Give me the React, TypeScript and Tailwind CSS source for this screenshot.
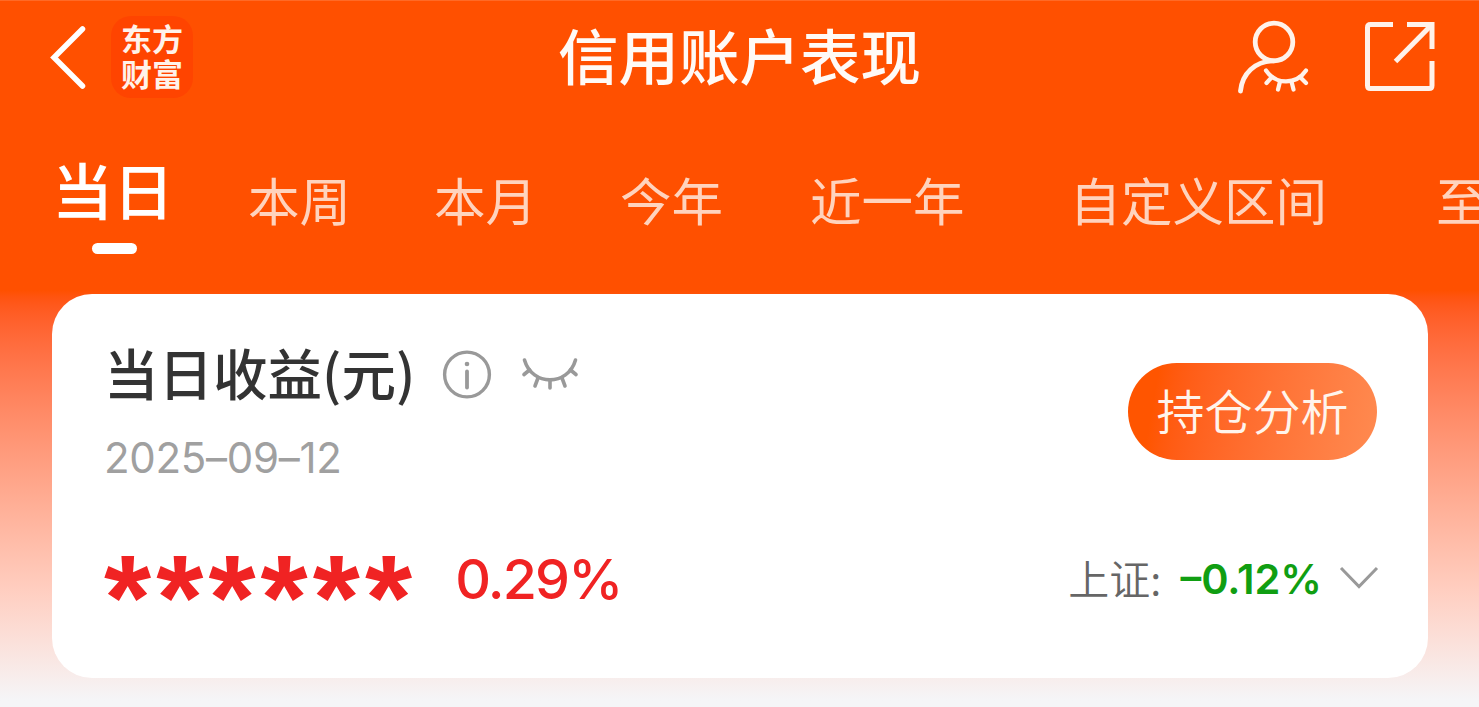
import clsx from "clsx";

interface Tab {
  label: string;
  spacing: string;
}

const tabs: Tab[] = [
  { label: "本周", spacing: "ml-[74px]" },
  { label: "本月", spacing: "ml-[83px]" },
  { label: "今年", spacing: "ml-[83px]" },
  { label: "近一年", spacing: "ml-[87px]" },
  { label: "自定义区间", spacing: "ml-[105px]" },
  { label: "至今", spacing: "ml-[109px]" },
];

function BackIcon() {
  return (
    <svg viewBox="0 0 40 64" className="h-16 w-10" fill="none" stroke="#fff" strokeWidth="5.5">
      <path d="M34.5 4 6 32.5 34.5 61" strokeLinecap="round" strokeLinejoin="miter" />
    </svg>
  );
}

function AccountHiddenIcon() {
  return (
    <svg
      viewBox="0 0 80 82"
      className="h-[82px] w-20"
      fill="none"
      stroke="#fff2ea"
      strokeWidth="4.8"
      strokeLinecap="round"
    >
      <circle cx="42" cy="26" r="18.8" />
      <path d="M8.5 75C10 58 23 44.8 42 44.8" />
      <path d="M34 54.5C44 69 64 69 74 54.5" strokeWidth="4.2" />
      <path d="M40 61l-5.5 6M48 65.5l-2 8M59.5 65.5l2 8M68 61l6 6" strokeWidth="4.2" />
    </svg>
  );
}

function ShareIcon() {
  return (
    <svg viewBox="0 0 75 75" className="h-[75px] w-[75px]" fill="none" stroke="#fff2ea" strokeWidth="5">
      <path d="M31 5.5H8.5q-3 0-3 3V66.5q0 3 3 3H67q3 0 3-3V42" />
      <path d="M45 5.5H70V30" />
      <path d="M69 6.5 33.5 42.5" />
    </svg>
  );
}

function InfoIcon() {
  return (
    <svg viewBox="0 0 50 50" className="h-[50px] w-[50px]" fill="none" stroke="#999" strokeWidth="3.4">
      <circle cx="25" cy="25.5" r="22.4" />
      <path d="M25 22.5V38.5" strokeWidth="3.8" strokeLinecap="round" />
      <circle cx="25" cy="15" r="2.3" fill="#999" stroke="none" />
    </svg>
  );
}

function EyeClosedIcon() {
  return (
    <svg
      viewBox="0 0 60 40"
      className="h-10 w-[60px]"
      fill="none"
      stroke="#999"
      strokeWidth="3.6"
      strokeLinecap="round"
    >
      <path d="M4.5 6C12 32.5 48 32.5 55.5 6" />
      <path d="M9.5 16 4 20.5M18 24l-3 8M30 26v8M42 24l3 8M50.5 16l5.5 4.5" />
    </svg>
  );
}

function Header() {
  return (
    <header className="grid h-[111px] grid-cols-[1fr_auto_1fr] items-center pr-[42px] pl-12">
      <div className="flex items-center gap-[23px]">
        <BackIcon />
        <div className="flex h-[82px] w-[82px] flex-col items-center justify-center rounded-[20px] bg-[#ff4400] text-center text-[31px] leading-[35px] font-bold text-[#fff2ea]">
          <p className="pb-1">
            东方
            <br />
            财富
          </p>
        </div>
      </div>
      <h1 className="mr-1.5 pb-[5px] text-[60.5px] leading-[100px] font-medium text-[#fffaf6]">信用账户表现</h1>
      <div className="flex items-center justify-end gap-[50px]">
        <AccountHiddenIcon />
        <ShareIcon />
      </div>
    </header>
  );
}

function PeriodTabs() {
  return (
    <nav className="flex h-[182px] items-start overflow-hidden pl-[52px] whitespace-nowrap">
      <button className="flex shrink-0 flex-col items-center pt-8">
        <span className="text-[61px] leading-[90px] font-medium text-white">当日</span>
        <span className="mt-[9px] h-[11px] w-[45px] translate-x-px rounded-full bg-white" />
      </button>
      {tabs.map((tab) => (
        <button
          key={tab.label}
          className={clsx("shrink-0 pt-[52px] text-[51.5px] leading-[70px] font-normal text-[#ffd3bd]", tab.spacing)}
        >
          {tab.label}
        </button>
      ))}
    </nav>
  );
}

function EarningsCard() {
  return (
    <section className="mr-[51px] ml-[52px] flex h-96 flex-col rounded-[40px] bg-white pr-[51px] pl-[52px]">
      <div className="flex justify-between">
        <div>
          <div className="mt-10 flex h-20 items-center">
            <h2 className="pb-[5px] text-[54.5px] leading-[74px] font-medium text-[#333]">当日收益(元)</h2>
            <div className="ml-[27px]">
              <InfoIcon />
            </div>
            <div className="ml-7">
              <EyeClosedIcon />
            </div>
          </div>
          <p className="mt-5 font-[Inter] text-[42px] leading-[48px] font-normal tracking-[-0.3px] text-[#a0a0a0]">
            2025–09–12
          </p>
        </div>
        <button className="mt-[69px] h-[97px] w-[249px] rounded-full bg-linear-100 from-[#ff5500] from-12% to-[#ff8a50] pb-1 text-[48px] leading-[93px] font-[350] text-[#fff4ec]">
          持仓分析
        </button>
      </div>

      <div className="mt-14 flex h-20 items-center justify-between">
        <div className="flex items-center text-[#f02323]">
          <span className="h-20 font-['Liberation_Sans'] text-[121px] leading-[118px] font-bold tracking-[5.1px]">
            ******
          </span>
          <span className="ml-[38px] pt-0.5 font-[Inter] text-[55.5px] leading-[80px] font-medium tracking-[-1.8px]">
            0.29%
          </span>
        </div>
        <button className="flex items-center">
          <span className="pb-0.5 text-[41px] leading-[60px] font-[350] text-[#666]">上证:</span>
          <span className="ml-[19px] pt-0.5 font-[Inter] text-[41.5px] leading-[60px] font-semibold text-[#109e12]">
            –0.12%
          </span>
          <svg
            viewBox="0 0 40 26"
            className="-mr-0.5 ml-[17px] h-[26px] w-10"
            fill="none"
            stroke="#999"
            strokeWidth="3"
          >
            <path d="M2 3 20 21.5 38 3" />
          </svg>
        </button>
      </div>
    </section>
  );
}

export default function App() {
  return (
    <main className="h-[707px] w-[1479px] overflow-hidden border-t border-[#ff6a26] bg-[#ff5000] bg-linear-to-b from-[#ff5000] from-41% to-[#f5f5f7] to-99% font-['Noto_Sans_CJK_SC',sans-serif]">
      <Header />
      <PeriodTabs />
      <EarningsCard />
    </main>
  );
}
